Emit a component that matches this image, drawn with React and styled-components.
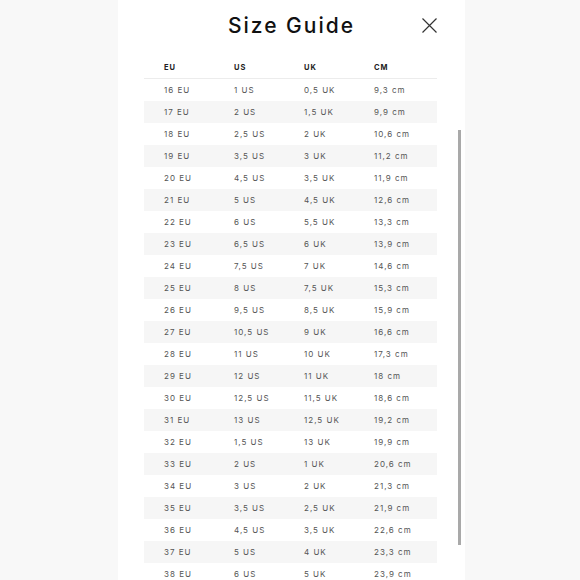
import React from 'react';
import styled, { createGlobalStyle } from 'styled-components';

const GlobalStyle = createGlobalStyle`
  html, body {
    margin: 0;
    padding: 0;
    background: #f8f8f8;
  }
  body {
    font-family: Inter, 'Liberation Sans', sans-serif;
  }
`;

const Page = styled.div`
  width: 580px;
  height: 580px;
  overflow: hidden;
  background: #f8f8f8;
`;

const Panel = styled.div`
  width: 347px;
  height: 580px;
  margin-left: 118px;
  background: #fff;
  display: flex;
  flex-direction: column;
`;

const Header = styled.div`
  flex-shrink: 0;
  display: grid;
  grid-template-columns: 1fr auto 1fr;
  align-items: center;
  height: 50px;
  padding-right: 28px;
  padding-left: 28px;
`;

const Title = styled.h1`
  grid-column: 2;
  margin: 0;
  font-size: 21px;
  font-weight: 500;
  letter-spacing: 2px;
  color: #111;
`;

const CloseBtn = styled.button`
  grid-column: 3;
  justify-self: end;
  display: flex;
  padding: 0;
  background: none;
  border: none;
  cursor: pointer;
`;

const Body = styled.div`
  flex-shrink: 0;
  display: flex;
  flex-direction: row;
  gap: 21px;
  padding-left: 26px;
  padding-top: 7px;
`;

const Table = styled.div`
  width: 293px;
  display: flex;
  flex-direction: column;
`;

const Row = styled.div`
  display: grid;
  grid-template-columns: repeat(4, 70px);
  align-items: center;
  height: ${(p) => (p.$head ? '21px' : '22px')};
  padding-left: 20px;
  background: ${(p) => (p.$striped ? '#f6f6f6' : '#fff')};
  border-bottom: ${(p) => (p.$head ? '1px solid #ececec' : 'none')};
`;

const Cell = styled.span`
  font-size: ${(p) => (p.$head ? '7.5px' : '8px')};
  font-weight: ${(p) => (p.$head ? 700 : 400)};
  letter-spacing: 1px;
  color: ${(p) => (p.$head ? '#222' : '#555')};
  white-space: nowrap;
`;

const Scrollbar = styled.div`
  padding-top: 73px;
`;

const Thumb = styled.div`
  width: 3px;
  height: 415px;
  background: #a9a9a9;
`;

const sizes = [
  ['16 EU', '1 US', '0,5 UK', '9,3 cm'],
  ['17 EU', '2 US', '1,5 UK', '9,9 cm'],
  ['18 EU', '2,5 US', '2 UK', '10,6 cm'],
  ['19 EU', '3,5 US', '3 UK', '11,2 cm'],
  ['20 EU', '4,5 US', '3,5 UK', '11,9 cm'],
  ['21 EU', '5 US', '4,5 UK', '12,6 cm'],
  ['22 EU', '6 US', '5,5 UK', '13,3 cm'],
  ['23 EU', '6,5 US', '6 UK', '13,9 cm'],
  ['24 EU', '7,5 US', '7 UK', '14,6 cm'],
  ['25 EU', '8 US', '7,5 UK', '15,3 cm'],
  ['26 EU', '9,5 US', '8,5 UK', '15,9 cm'],
  ['27 EU', '10,5 US', '9 UK', '16,6 cm'],
  ['28 EU', '11 US', '10 UK', '17,3 cm'],
  ['29 EU', '12 US', '11 UK', '18 cm'],
  ['30 EU', '12,5 US', '11,5 UK', '18,6 cm'],
  ['31 EU', '13 US', '12,5 UK', '19,2 cm'],
  ['32 EU', '1,5 US', '13 UK', '19,9 cm'],
  ['33 EU', '2 US', '1 UK', '20,6 cm'],
  ['34 EU', '3 US', '2 UK', '21,3 cm'],
  ['35 EU', '3,5 US', '2,5 UK', '21,9 cm'],
  ['36 EU', '4,5 US', '3,5 UK', '22,6 cm'],
  ['37 EU', '5 US', '4 UK', '23,3 cm'],
  ['38 EU', '6 US', '5 UK', '23,9 cm'],
];

const App = () => (
  <Page>
    <GlobalStyle />
    <Panel>
      <Header>
        <Title>Size Guide</Title>
        <CloseBtn type="button" aria-label="close">
          <svg width="15" height="15" viewBox="0 0 15 15">
            <path d="M0.5 0.5 L14.5 14.5 M14.5 0.5 L0.5 14.5" stroke="#333" strokeWidth="1.2" fill="none" />
          </svg>
        </CloseBtn>
      </Header>
      <Body>
        <Table>
          <Row $head>
            {['EU', 'US', 'UK', 'CM'].map((h) => (
              <Cell $head key={h}>{h}</Cell>
            ))}
          </Row>
          {sizes.map((r, i) => (
            <Row key={r[0]} $striped={i % 2 === 1}>
              {r.map((c, j) => (
                <Cell key={j}>{c}</Cell>
              ))}
            </Row>
          ))}
        </Table>
        <Scrollbar>
          <Thumb />
        </Scrollbar>
      </Body>
    </Panel>
  </Page>
);

export default App;
